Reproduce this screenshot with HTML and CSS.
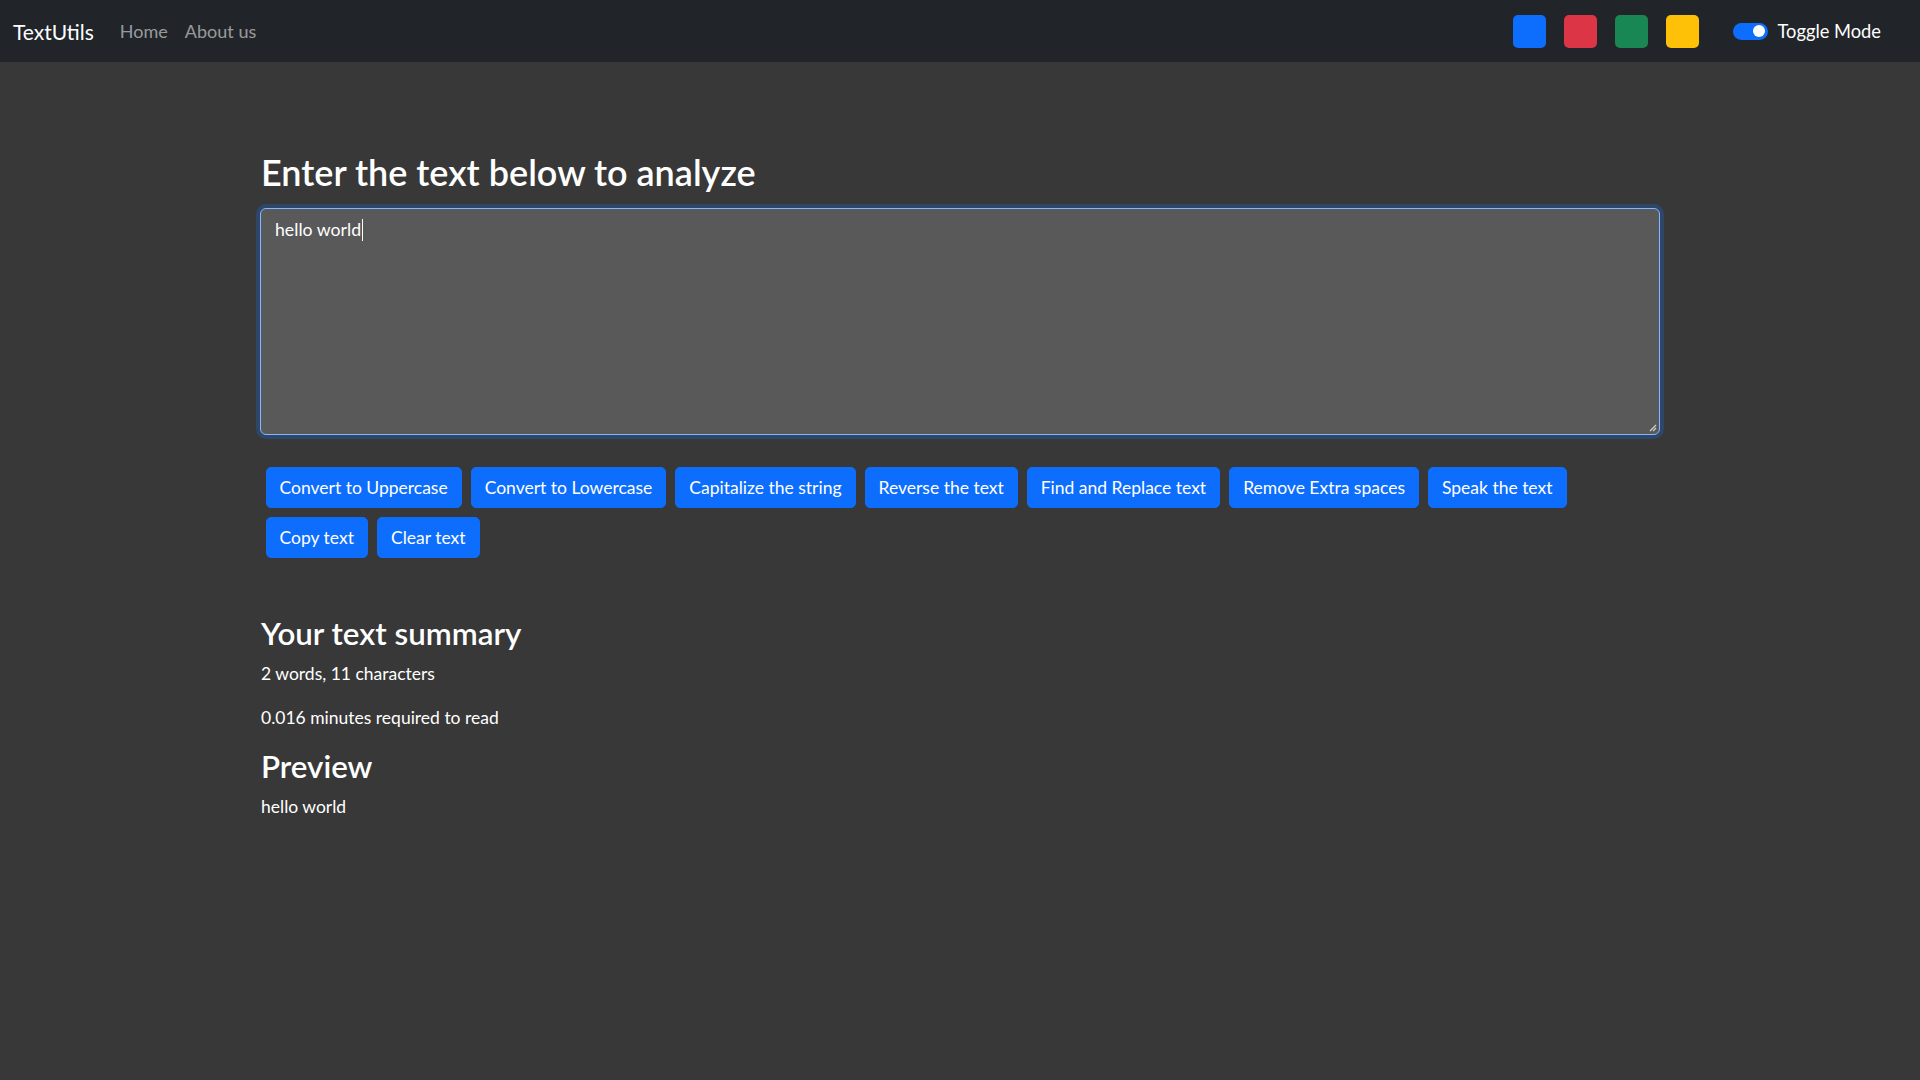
FILE: index.html
```html
<!DOCTYPE html>
<html lang="en">
<head>
<meta charset="utf-8">
<title>TextUtils</title>
<link rel="stylesheet" href="styles.css">
</head>
<body>
<nav class="navbar">
  <div class="nav-left">
    <a class="brand" href="#">TextUtils</a>
    <ul class="nav-links">
      <li><a href="#">Home</a></li>
      <li><a href="#">About us</a></li>
    </ul>
  </div>
  <div class="nav-right">
    <div class="swatches">
      <span class="swatch swatch-blue"></span>
      <span class="swatch swatch-red"></span>
      <span class="swatch swatch-green"></span>
      <span class="swatch swatch-yellow"></span>
    </div>
    <label class="switch">
      <span class="track"><span class="knob"></span></span>
      <span class="switch-label">Toggle Mode</span>
    </label>
  </div>
</nav>

<main class="container">
  <h1 class="title">Enter the text below to analyze</h1>
  <div class="textbox" role="textbox" aria-multiline="true">
    <span class="typed">hello world</span><span class="caret"></span>
    <svg class="grip" width="10" height="10" viewBox="0 0 10 10"><path d="M9 3 L3 9 M9 6 L6 9" stroke="#cfcfcf" stroke-width="1.2" fill="none"/></svg>
  </div>

  <div class="actions">
    <div class="btn-row">
      <button class="btn">Convert to Uppercase</button>
      <button class="btn">Convert to Lowercase</button>
      <button class="btn">Capitalize the string</button>
      <button class="btn">Reverse the text</button>
      <button class="btn">Find and Replace text</button>
      <button class="btn">Remove Extra spaces</button>
      <button class="btn">Speak the text</button>
    </div>
    <div class="btn-row">
      <button class="btn">Copy text</button>
      <button class="btn">Clear text</button>
    </div>
  </div>

  <section class="summary">
    <h2 class="subtitle">Your text summary</h2>
    <p class="stat">2 words, 11 characters</p>
    <p class="stat stat-gap">0.016 minutes required to read</p>
    <h2 class="subtitle preview-title">Preview</h2>
    <p class="stat">hello world</p>
  </section>
</main>
</body>
</html>
```
FILE: styles.css
```css
* { box-sizing: border-box; }
html, body { margin: 0; padding: 0; }
body {
  background: #383838;
  color: #ffffff;
  font-family: "Lato", "Open Sans", "DejaVu Sans", sans-serif;
  min-height: 1080px;
}
a { text-decoration: none; }

.navbar {
  height: 62px;
  background: #212529;
  display: flex;
  align-items: center;
  justify-content: space-between;
  padding: 0 39px 0 13px;
}
.nav-left { display: flex; align-items: center; }
.brand { color: #fff; font-size: 21px; }
.nav-links { list-style: none; display: flex; gap: 17px; margin: 0 0 0 26px; padding: 0; }
.nav-links a { color: rgba(255,255,255,0.55); font-size: 18px; }

.nav-right { display: flex; align-items: center; }
.swatches { display: flex; gap: 18px; margin-right: 34px; }
.swatch { width: 33px; height: 33px; border-radius: 5px; display: block; }
.swatch-blue { background: #0d6efd; }
.swatch-red { background: #dc3545; }
.swatch-green { background: #198754; }
.swatch-yellow { background: #ffc107; }

.switch { display: flex; align-items: center; gap: 10px; cursor: pointer; }
.track {
  width: 35px; height: 17px; border-radius: 9px; background: #0d6efd;
  display: flex; align-items: center; justify-content: flex-end; padding-right: 3px;
}
.knob { width: 12px; height: 12px; border-radius: 50%; background: #fff; display: block; }
.switch-label { font-size: 18.3px; color: #fff; }

.container { width: 1400px; margin: 0 auto; padding-top: 90px; }

.title { font-size: 36px; font-weight: 600; line-height: 40px; margin: 0 0 16px 1px; }

.textbox {
  position: relative;
  height: 227px;
  background: #595959;
  border: 1px solid #86b7fe;
  border-radius: 6px;
  box-shadow: 0 0 0 4px rgba(13,110,253,0.25);
  padding: 6px 14px;
  font-size: 17.7px;
  line-height: 30px;
  color: #fff;
}
.caret { display: inline-block; width: 1px; height: 22px; background: #fff; vertical-align: -5px; margin-left: 1px; }
.grip { position: absolute; right: 2px; bottom: 2px; }

.actions { margin-top: 32px; padding-left: 5.5px; display: flex; flex-direction: column; gap: 9px; }
.btn-row { display: flex; gap: 9px; }
.btn {
  flex: 0 0 auto;
  white-space: nowrap;
  height: 41px;
  padding: 0 13px;
  background: #0d6efd;
  border: 1px solid #0d6efd;
  border-radius: 5px;
  color: #fff;
  font-family: inherit;
  font-size: 17.5px;
}

.summary { margin-top: 58px; padding-left: 1px; }
.subtitle { font-size: 31.3px; font-weight: 600; line-height: 35px; margin: 0 0 11px; }
.stat { font-size: 17.5px; line-height: 24px; margin: 0; }
.stat-gap { margin-top: 20px; }
.preview-title { margin-top: 19px; }
```
